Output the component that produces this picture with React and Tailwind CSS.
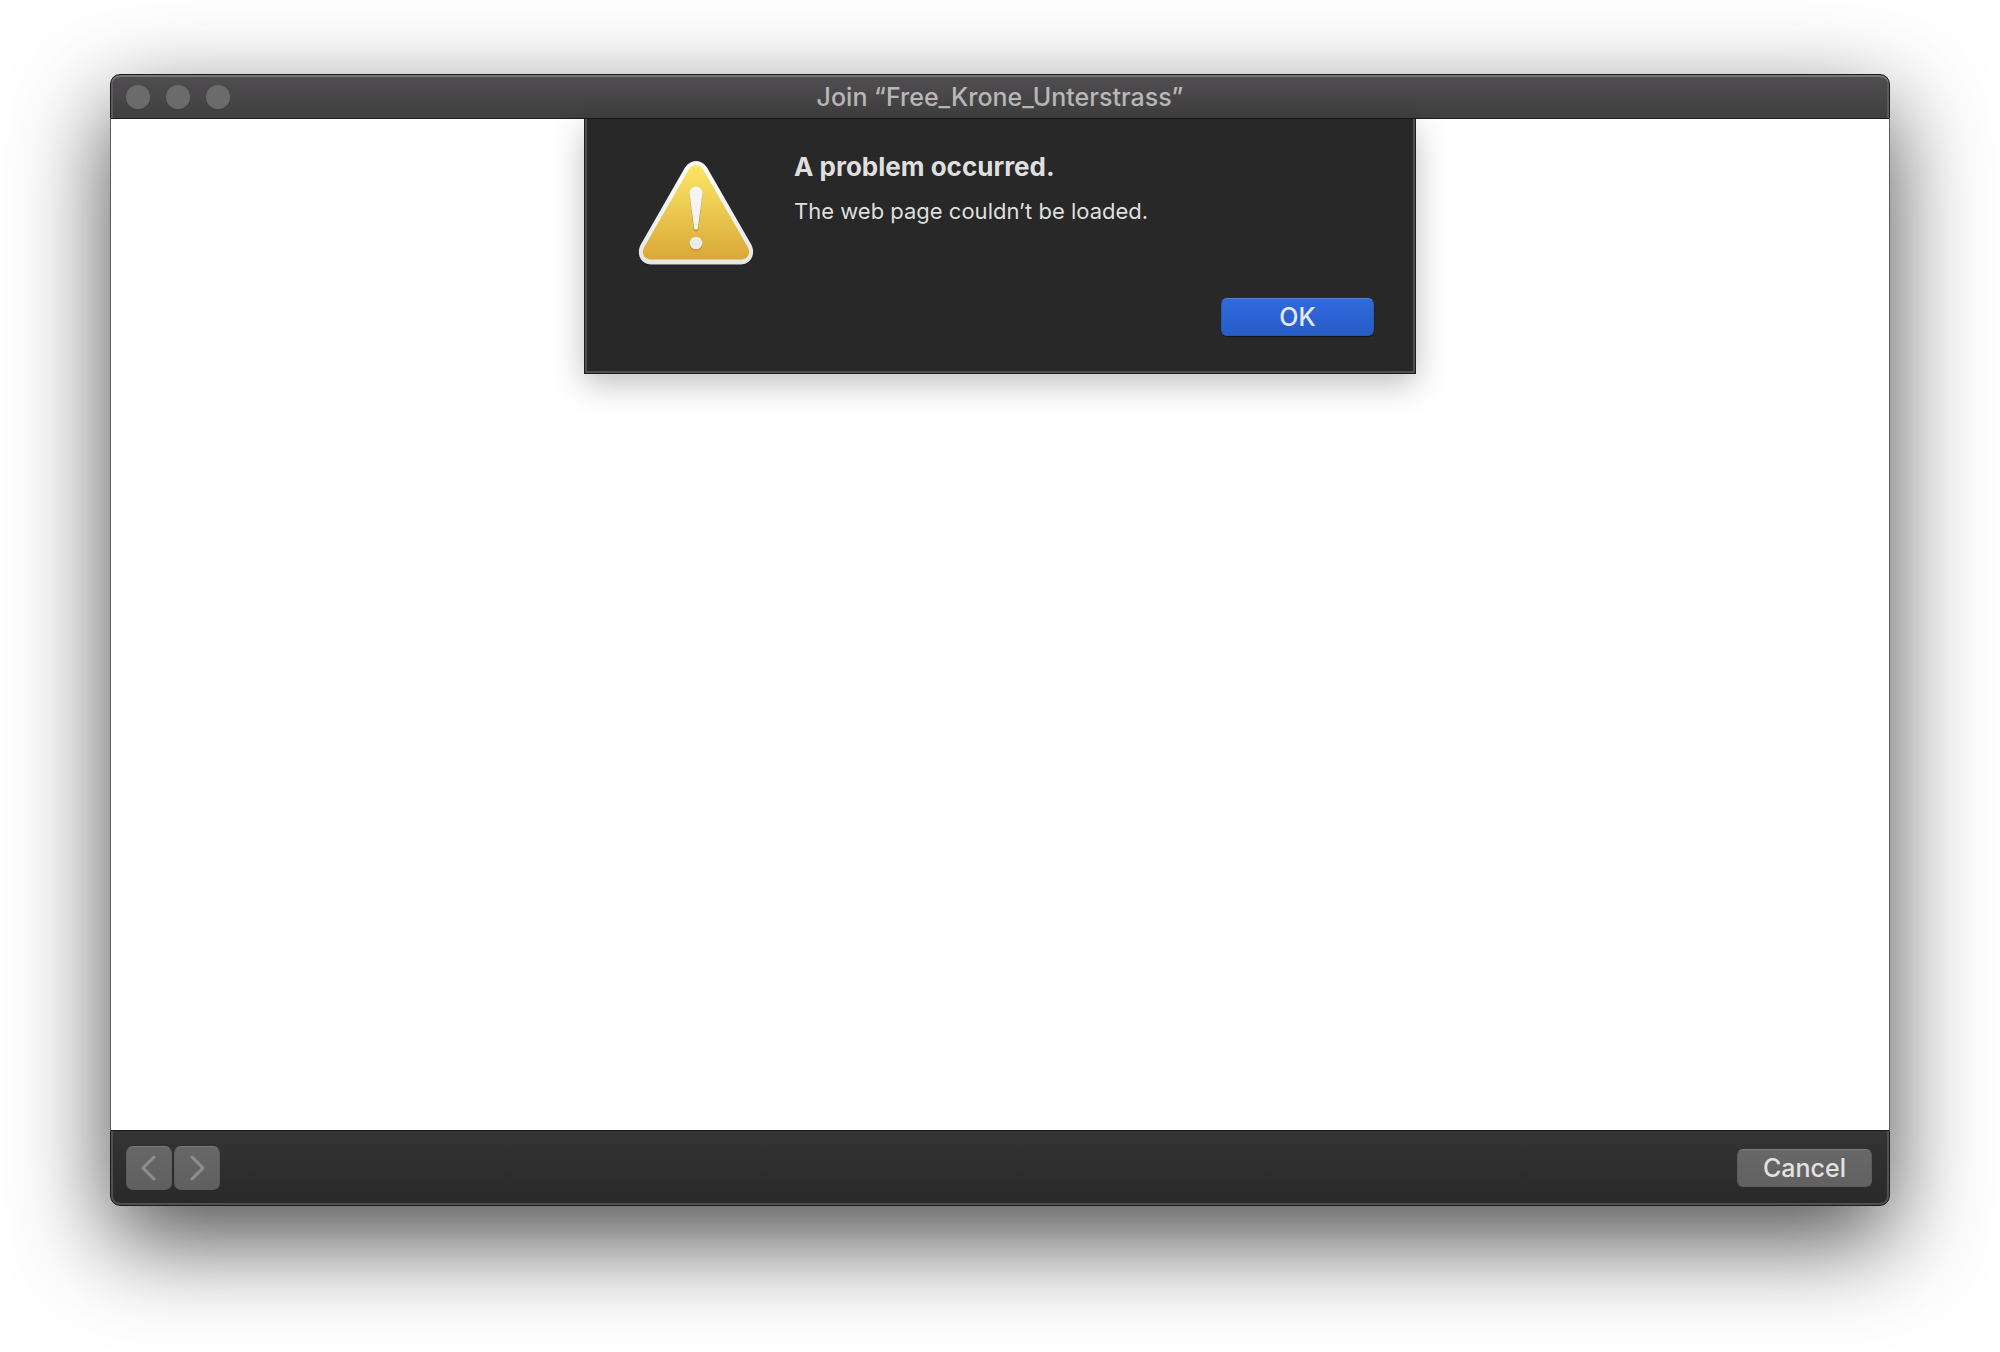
import { useState } from 'react';

function WarningIcon() {
  return (
    <svg viewBox="0 0 116 106" className="h-[106px] w-[116px] shrink-0" aria-hidden="true">
      <defs>
        <linearGradient id="edge" x1="0" y1="0" x2="0" y2="1">
          <stop offset="0" stopColor="#ffffff" />
          <stop offset="1" stopColor="#e6e6e6" />
        </linearGradient>
        <linearGradient id="amber" x1="0" y1="0" x2="0" y2="1">
          <stop offset="0" stopColor="#fbe767" />
          <stop offset="1" stopColor="#d9a837" />
        </linearGradient>
      </defs>
      <path
        d="M47 6.500C50 2.200 53.500 0 58 0s8 2.200 11 6.500L113.500 84c4.500 9.500-1 19.500-11 19.500h-89C3 103.500-2 93.500 2.500 84Z"
        transform="translate(0 1)"
        fill="#111111"
        opacity="0.5"
      />
      <path
        d="M47 6.500C50 2.200 53.500 0 58 0s8 2.200 11 6.500L113.500 84c4.500 9.500-1 19.500-11 19.500h-89C3 103.500-2 93.500 2.500 84Z"
        fill="url(#edge)"
      />
      <path
        d="M50.500 9C52.500 5.800 54.800 4 58 4s5.500 1.800 7.500 5l44.500 77.500c3 6-.5 12-7 12H13c-6.500 0-10-6-7-12Z"
        fill="url(#amber)"
      />
      <path d="M51.500 33.500a6.500 6.500 0 0 1 13 0L60.500 68c-.5 3.500-4.500 3.500-5 0Z" fill="#a17a20" opacity="0.5" />
      <circle cx="58" cy="83.500" r="6.300" fill="#a17a20" opacity="0.6" />
      <path d="M51.500 32a6.500 6.500 0 0 1 13 0L60 66.500c-.4 3-3.600 3-4 0Z" fill="#f5f5f5" />
      <circle cx="58" cy="82" r="6.300" fill="#ececec" />
    </svg>
  );
}

function NavButton({ label, path }) {
  return (
    <button
      type="button"
      disabled
      aria-label={label}
      className="flex h-11 w-[46px] items-center justify-center rounded-[7px] border border-[#5c5c5c] border-t-[#777777] bg-linear-to-b from-[#676767] to-[#606060]"
    >
      <svg
        viewBox="0 0 16 26"
        className="h-[26px] w-4"
        fill="none"
        stroke="#8e8e8e"
        strokeWidth="3"
        strokeLinecap="round"
        strokeLinejoin="round"
      >
        <path d={path} />
      </svg>
    </button>
  );
}

function Sheet({ onClose }) {
  return (
    <div
      role="alertdialog"
      aria-labelledby="sheet-title"
      aria-describedby="sheet-text"
      className="flex w-[832px] flex-col border border-t-0 border-[#1c1c1c] bg-[#282828] shadow-[inset_2px_0_#505050,inset_-2px_0_#505050,inset_0_-2px_#505050,0_10px_30px_rgba(0,0,0,0.25)]"
    >
      <div className="flex gap-10 pt-[42px] pl-[53px]">
        <WarningIcon />
        <div className="-mt-2.5">
          <h2 id="sheet-title" className="text-[26px] leading-8 font-bold text-[#dfdfdf]">
            A problem occurred.
          </h2>
          <p id="sheet-text" className="mt-3.5 text-[22px] leading-7 text-[#dfdfdf]">
            The web page couldn’t be loaded.
          </p>
        </div>
      </div>
      <div className="flex justify-end pt-[31px] pr-[41px] pb-[37px]">
        <button
          type="button"
          onClick={onClose}
          className="h-[38px] w-[153px] rounded-md border border-[#2857b5] border-t-[#5583dc] bg-linear-to-b from-[#2f69de] to-[#285dc6] text-[25px] leading-8 font-medium text-[#e3eaf8] shadow-[0_1px_1px_rgba(0,0,0,0.5)]"
        >
          OK
        </button>
      </div>
    </div>
  );
}

export default function App() {
  const [open, setOpen] = useState(true);

  return (
    <div className="flex min-h-screen flex-col overflow-hidden bg-white px-[110px] pt-[74px] pb-[146px] font-[Inter,'Liberation_Sans',sans-serif]">
      <div className="flex flex-1 flex-col rounded-[10px] shadow-[0_34px_96px_rgba(0,0,0,0.7)]">
        {/* Title bar */}
        <header className="grid h-[45px] grid-cols-[1fr_auto_1fr] items-center rounded-t-[10px] border border-[#1c1a1c] bg-linear-to-b from-[#504e50] to-[#403f40] px-[15px] shadow-[inset_0_2px_#767476,inset_2px_0_#5c5c5c,inset_-2px_0_#5c5c5c]">
          <div className="flex gap-4">
            <span className="size-6 rounded-full bg-[#6b6b6b]" />
            <span className="size-6 rounded-full bg-[#6b6b6b]" />
            <span className="size-6 rounded-full bg-[#6b6b6b]" />
          </div>
          <h1 className="text-[25px] leading-8 font-medium text-[#b9b8b9]">Join “Free_Krone_Unterstrass”</h1>
        </header>

        {/* Page area */}
        <main className="flex flex-1 items-start justify-center border-x border-[#5a5a5a] bg-white">
          {open && <Sheet onClose={() => setOpen(false)} />}
        </main>

        {/* Bottom bar */}
        <footer className="flex h-19 items-center justify-between rounded-b-[10px] border border-[#1c1c1c] bg-linear-to-b from-[#343434] to-[#292929] px-[15px] shadow-[inset_0_-2px_#505050,inset_2px_0_#505050,inset_-2px_0_#505050]">
          <div className="flex gap-0.5">
            <NavButton label="Back" path="M13 2 2 13 13 24" />
            <NavButton label="Forward" path="M3 2 14 13 3 24" />
          </div>
          <button
            type="button"
            className="mr-0.5 h-[38px] w-[135px] rounded-md border border-[#5c5c5c] border-t-[#7a7a7a] bg-linear-to-b from-[#686868] to-[#616161] text-[25px] leading-8 font-medium text-[#e2e2e2]"
          >
            Cancel
          </button>
        </footer>
      </div>
    </div>
  );
}
